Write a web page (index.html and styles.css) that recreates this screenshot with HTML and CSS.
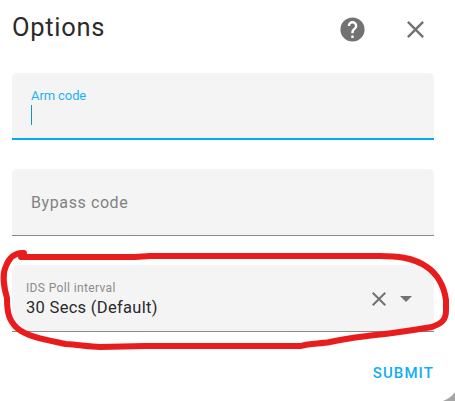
FILE: index.html
```
<!DOCTYPE html>
<html lang="en">
<head>
<meta charset="utf-8">
<title>Options</title>
<link rel="stylesheet" href="styles.css">
</head>
<body>
<main class="dialog">
  <header class="header">
    <h1 class="title">Options</h1>
    <svg class="icon" viewBox="0 0 24 24"><path d="M15.07 11.25l-.9.92C13.45 12.89 13 13.5 13 15h-2v-.5c0-1.11.45-2.11 1.17-2.83l1.24-1.26c.37-.36.59-.86.59-1.41a2 2 0 0 0-4 0H8a4 4 0 0 1 8 0c0 .88-.36 1.67-.93 2.25M13 19h-2v-2h2M12 2a10 10 0 1 0 0 20 10 10 0 0 0 0-20z"/></svg>
    <svg class="icon" viewBox="0 0 24 24"><path d="M19 6.41L17.59 5 12 10.59 6.41 5 5 6.41 10.59 12 5 17.59 6.41 19 12 13.41 17.59 19 19 17.59 13.41 12z"/></svg>
  </header>
  <form class="form">
    <div class="field field-active">
      <span class="label">Arm code</span>
      <span class="caret"></span>
    </div>
    <div class="field field-empty">
      <span class="placeholder">Bypass code</span>
    </div>
    <div class="field field-select">
      <div class="select-text">
        <span class="label">IDS Poll interval</span>
        <span class="value">30 Secs (Default)</span>
      </div>
      <svg class="clear" viewBox="0 0 24 24"><path d="M19 6.41L17.59 5 12 10.59 6.41 5 5 6.41 10.59 12 5 17.59 6.41 19 12 13.41 17.59 19 19 17.59 13.41 12z"/></svg>
      <svg class="arrow" viewBox="0 0 12 6"><path d="M0 0h12L6 6z"/></svg>
    </div>
  </form>
  <footer class="footer"><span class="submit">SUBMIT</span></footer>
</main>
<svg class="marker" viewBox="0 0 455 401">
  <path d="M24 253C15 252 9 258 6 266C2 274 4 288 7 298C7 310 8 320 17 328C27 337 47 340 66 344C80 345 90 347 100 347L145 346H301C310 343 320 344 330 342C348 338 360 337 375 335C395 333 414 330 432 327C443 323 446 319 446 310V300C444 286 437 274 427 267C413 257 395 256 380 256H150L135 257H21"/>
</svg>
<svg class="corner" viewBox="0 0 12 9"><path d="M0 9Q8 6 12 0V9z"/></svg>
</body>
</html>
```
FILE: styles.css
```
body {
  margin: 0;
  width: 455px;
  height: 401px;
  position: relative;
  overflow: hidden;
  background: #fff;
  font-family: Roboto, sans-serif;
  color: #2a2a2a;
}
.dialog {
  padding: 0 21px 0 12px;
}
.header {
  display: flex;
  align-items: center;
  gap: 34px;
  height: 59px;
  padding-right: 4px;
  margin-bottom: 14px;
}
.title {
  flex: 1;
  margin: 0;
  padding-bottom: 5px;
  font-size: 25.5px;
  font-weight: 400;
  line-height: 32px;
  letter-spacing: 0.7px;
}
.icon {
  width: 29px;
  height: 29px;
  fill: #727272;
}
.form {
  display: flex;
  flex-direction: column;
  gap: 29px;
}
.field {
  box-sizing: border-box;
  display: flex;
  height: 67px;
  padding: 0 19px;
  background: #f4f4f4;
  border-bottom: 1px solid #898989;
  border-radius: 5px 5px 0 0;
}
.label {
  font-size: 13px;
  line-height: 16px;
}
.field-active {
  flex-direction: column;
  padding-top: 15px;
  border-bottom: 2px solid #03a9f4;
}
.field-active .label {
  color: #1cb1f5;
  letter-spacing: -0.1px;
}
.caret {
  width: 1px;
  height: 20px;
  margin-top: 1px;
  background: #1492cc;
}
.field-empty {
  align-items: center;
  font-size: 16px;
  letter-spacing: 0.6px;
  color: #828282;
}
.field-select {
  align-items: center;
  padding: 2px 22px 0 14px;
}
.select-text {
  flex: 1;
  display: flex;
  flex-direction: column;
}
.field-select .label {
  font-size: 12px;
  letter-spacing: 0.36px;
  color: #8b8b8b;
}
.value {
  font-size: 16.5px;
  line-height: 23px;
  letter-spacing: 0.3px;
}
.clear {
  width: 24px;
  height: 24px;
  margin-right: 9px;
  fill: #727272;
}
.arrow {
  width: 12px;
  height: 6px;
  fill: #727272;
}
.footer {
  display: flex;
  justify-content: flex-end;
  padding-top: 31px;
}
.submit {
  font-size: 15px;
  font-weight: 500;
  line-height: 20px;
  letter-spacing: 1.1px;
  color: #12adf4;
}
.marker {
  position: absolute;
  inset: 0;
  width: 455px;
  height: 401px;
  fill: none;
  stroke: #e81c1c;
  stroke-width: 6;
  stroke-linecap: round;
  stroke-linejoin: round;
}
.corner {
  position: absolute;
  right: 0;
  bottom: 0;
  width: 12px;
  height: 9px;
  fill: #a5a5a5;
}
```
